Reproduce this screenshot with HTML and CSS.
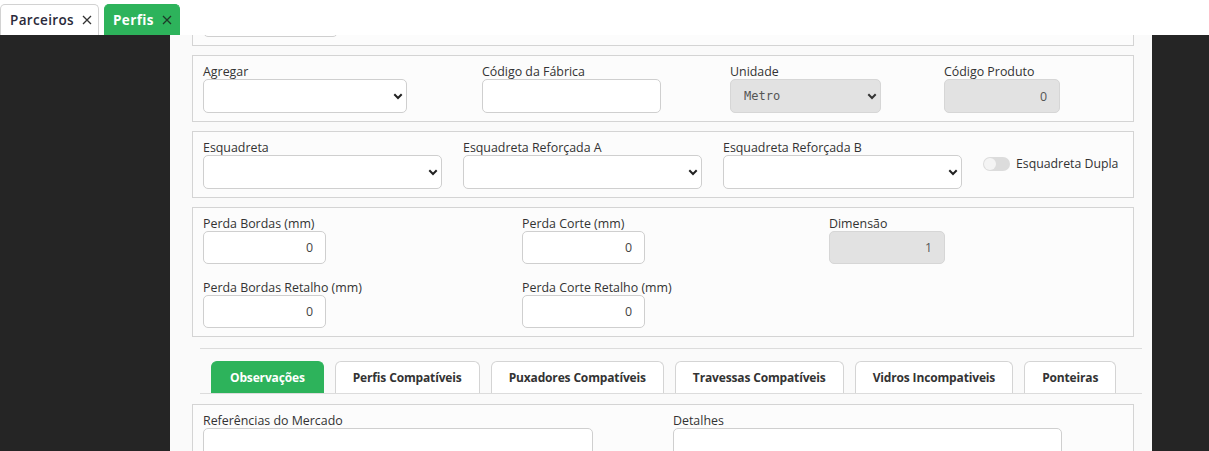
FILE: index.html
```html
<!DOCTYPE html>
<html lang="pt-BR">
<head>
<meta charset="utf-8">
<title>Perfis</title>
<link rel="stylesheet" href="styles.css">
</head>
<body>
<div class="topbar">
  <div class="ptab">
    <span class="ptab-label">Parceiros</span>
    <svg class="ptab-x" width="10" height="10" viewBox="0 0 10 10"><path d="M1 1L9 9M9 1L1 9" stroke="currentColor" stroke-width="1.3" fill="none"/></svg>
  </div>
  <div class="ptab ptab-active">
    <span class="ptab-label">Perfis</span>
    <svg class="ptab-x" width="10" height="10" viewBox="0 0 10 10"><path d="M1 1L9 9M9 1L1 9" stroke="currentColor" stroke-width="1.3" fill="none"/></svg>
  </div>
</div>

<div class="main">
  <div class="side"></div>
  <div class="content">
    <div class="scroller">
      <fieldset class="box box-partial">
        <input class="inp inp-partial" type="text">
      </fieldset>

      <fieldset class="box">
        <div class="grid grid-a">
          <div class="field">
            <label class="lbl">Agregar</label>
            <div class="sel sel-agregar">
              <select><option></option></select>
              <svg class="chev" width="10" height="7" viewBox="0 0 10 7"><path d="M1.3 1.3L5 5L8.7 1.3" stroke="#222" stroke-width="2" fill="none"/></svg>
            </div>
          </div>
          <div class="field">
            <label class="lbl">Código da Fábrica</label>
            <input class="inp inp-fabrica" type="text">
          </div>
          <div class="field">
            <label class="lbl">Unidade</label>
            <div class="sel sel-unidade">
              <select class="disabled" disabled><option>Metro</option></select>
              <svg class="chev" width="10" height="7" viewBox="0 0 10 7"><path d="M1.3 1.3L5 5L8.7 1.3" stroke="#333" stroke-width="2" fill="none"/></svg>
            </div>
          </div>
          <div class="field">
            <label class="lbl">Código Produto</label>
            <input class="inp inp-num inp-dis inp-codprod" type="text" value="0" disabled>
          </div>
        </div>
      </fieldset>

      <fieldset class="box">
        <div class="row-esq">
          <div class="field">
            <label class="lbl">Esquadreta</label>
            <div class="sel sel-esq">
              <select><option></option></select>
              <svg class="chev" width="10" height="7" viewBox="0 0 10 7"><path d="M1.3 1.3L5 5L8.7 1.3" stroke="#222" stroke-width="2" fill="none"/></svg>
            </div>
          </div>
          <div class="field">
            <label class="lbl">Esquadreta Reforçada A</label>
            <div class="sel sel-esq">
              <select><option></option></select>
              <svg class="chev" width="10" height="7" viewBox="0 0 10 7"><path d="M1.3 1.3L5 5L8.7 1.3" stroke="#222" stroke-width="2" fill="none"/></svg>
            </div>
          </div>
          <div class="field">
            <label class="lbl">Esquadreta Reforçada B</label>
            <div class="sel sel-esq">
              <select><option></option></select>
              <svg class="chev" width="10" height="7" viewBox="0 0 10 7"><path d="M1.3 1.3L5 5L8.7 1.3" stroke="#222" stroke-width="2" fill="none"/></svg>
            </div>
          </div>
          <div class="switch-wrap">
            <span class="switch"><span class="knob"></span></span>
            <span class="switch-lbl">Esquadreta Dupla</span>
          </div>
        </div>
      </fieldset>

      <fieldset class="box">
        <div class="grid grid-c">
          <div class="field">
            <label class="lbl">Perda Bordas (mm)</label>
            <input class="inp inp-num inp-small" type="text" value="0">
          </div>
          <div class="field">
            <label class="lbl">Perda Corte (mm)</label>
            <input class="inp inp-num inp-small" type="text" value="0">
          </div>
          <div class="field">
            <label class="lbl">Dimensão</label>
            <input class="inp inp-num inp-dis inp-dim" type="text" value="1" disabled>
          </div>
          <div class="field">
            <label class="lbl">Perda Bordas Retalho (mm)</label>
            <input class="inp inp-num inp-small" type="text" value="0">
          </div>
          <div class="field">
            <label class="lbl">Perda Corte Retalho (mm)</label>
            <input class="inp inp-num inp-small" type="text" value="0">
          </div>
        </div>
      </fieldset>

      <hr class="sep">

      <ul class="tabs">
        <li class="tab tab-active">Observações</li>
        <li class="tab">Perfis Compatíveis</li>
        <li class="tab">Puxadores Compatíveis</li>
        <li class="tab">Travessas Compatíveis</li>
        <li class="tab">Vidros Incompativeis</li>
        <li class="tab">Ponteiras</li>
      </ul>

      <fieldset class="box">
        <div class="grid grid-d">
          <div class="field">
            <label class="lbl">Referências do Mercado</label>
            <textarea class="txt txt-ref"></textarea>
          </div>
          <div class="field">
            <label class="lbl">Detalhes</label>
            <textarea class="txt txt-det"></textarea>
          </div>
        </div>
      </fieldset>
    </div>
  </div>
  <div class="side side-right"></div>
</div>
</body>
</html>
```

FILE: styles.css
```css
* { box-sizing: border-box; }

html, body {
  margin: 0;
  padding: 0;
  height: 451px;
  overflow: hidden;
  font-family: "Open Sans", "Noto Sans", sans-serif;
  font-size: 12px;
  color: #333;
  background: #252525;
}

.topbar {
  height: 35px;
  background: #fff;
  display: flex;
  align-items: flex-end;
  gap: 5px;
}

.ptab {
  height: 31px;
  display: flex;
  align-items: center;
  gap: 8px;
  padding: 0 6px 0 9px;
  border: 1px solid #d2d2d2;
  border-bottom: none;
  border-radius: 5px 5px 0 0;
  background: #fff;
  color: #2a2a3a;
  font-size: 13.5px;
  font-weight: 600;
  letter-spacing: 0.35px;
}

.ptab-x { color: #333; }

.ptab-active {
  background: #2db35b;
  border-color: #2db35b;
  color: #fff;
  font-weight: 700;
  padding: 0 7px 0 8px;
}

.ptab-active .ptab-x { color: #1d3a28; }

.main {
  display: flex;
  height: 416px;
}

.side {
  width: 170px;
  background: #252525;
}

.side-right {
  flex: 1;
}

.content {
  width: 982px;
  background: #fafafa;
  overflow: hidden;
}

.scroller {
  padding: 0 18px 0 22px;
}

.box {
  margin: 0 0 9px;
  padding: 7px 10px 8px;
  border: 1px solid #d4d4d4;
  background: #fcfcfc;
  min-width: 0;
}

.box-partial {
  margin-top: -40px;
  margin-bottom: 9px;
}

.lbl {
  display: block;
  height: 16px;
  line-height: 17px;
  font-size: 12.4px;
  color: #333;
  white-space: nowrap;
}

.field {
  display: flex;
  flex-direction: column;
  align-items: flex-start;
}

.inp, .sel select, .txt {
  font-family: "Open Sans", "Noto Sans", sans-serif;
  font-size: 12.4px;
  color: #444;
  background: #fff;
  border: 1px solid #cfcfcf;
  border-radius: 5px;
  outline: none;
  margin: 0;
}

.inp {
  height: 34px;
  padding: 0 12px;
}

.inp-partial { width: 135px; }
.inp-fabrica { width: 179px; }
.inp-codprod { width: 116px; }

.inp-num { text-align: right; }

.inp-dis {
  background: #e2e2e2;
  border-color: #d6d6d6;
  color: #555;
}

.sel {
  position: relative;
}

.sel select {
  -webkit-appearance: none;
  appearance: none;
  height: 34px;
  width: 100%;
  padding: 0 14px;
  display: block;
}

.sel select.disabled {
  background: #e2e2e2;
  border-color: #d6d6d6;
  color: #555;
  font-family: "DejaVu Sans Mono", "Liberation Mono", monospace;
  font-size: 12px;
  padding-left: 13px;
  opacity: 1;
}

.chev {
  position: absolute;
  right: 4px;
  top: 14px;
  pointer-events: none;
}

.sel-agregar { width: 204px; }
.sel-unidade { width: 151px; }
.sel-esq { width: 239px; }

.grid { display: grid; }

.grid-a {
  grid-template-columns: 279px 248px 214px 1fr;
}

.row-esq {
  display: flex;
  gap: 21px;
  align-items: flex-start;
}

.switch-wrap {
  display: flex;
  align-items: center;
  gap: 6px;
  padding-top: 18px;
}

.switch {
  width: 27px;
  height: 14px;
  border-radius: 7px;
  background: #dcdcdc;
  display: flex;
  align-items: center;
  padding: 1px;
}

.knob {
  width: 12px;
  height: 12px;
  border-radius: 50%;
  background: #f4f4f4;
}

.switch-lbl {
  font-size: 12.3px;
  color: #333;
  line-height: 14px;
}

.grid-c {
  grid-template-columns: 319px 307px 1fr;
  row-gap: 15px;
}

.inp-small {
  width: 123px;
  height: 33px;
}

.inp-dim {
  width: 116px;
  height: 33px;
}

.sep {
  margin: 11px -8px 12px 8px;
  border: none;
  border-top: 1px solid #dcdcdc;
  height: 0;
}

.tabs {
  list-style: none;
  margin: 0 -8px 10px 8px;
  padding: 0 0 0 11px;
  display: flex;
  gap: 11px;
  border-bottom: 1px solid #dcdcdc;
  height: 33px;
}

.tab {
  height: 32px;
  display: flex;
  align-items: center;
  padding: 0 17px;
  border: 1px solid #d4d4d4;
  border-bottom: none;
  border-radius: 6px 6px 0 0;
  background: #fff;
  font-weight: 700;
  font-size: 12px;
  letter-spacing: -0.15px;
  color: #333;
  white-space: nowrap;
}

.tab-active {
  background: #2db35b;
  border-color: #2db35b;
  color: #fff;
  padding: 0 18px;
}

.grid-d {
  grid-template-columns: 470px 1fr;
}

.txt {
  height: 60px;
  resize: none;
  padding: 6px 10px;
}

.txt-ref { width: 390px; }
.txt-det { width: 389px; }
```
